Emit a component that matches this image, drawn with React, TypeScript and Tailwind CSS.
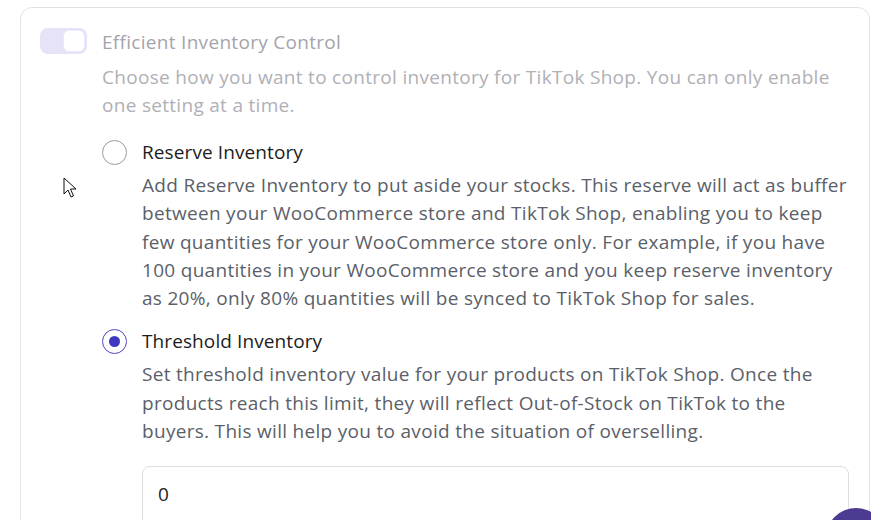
import React from 'react';

type Option = {
  id: string;
  label: string;
  lines: string[];
};

const options: Option[] = [
  {
    id: 'reserve',
    label: 'Reserve Inventory',
    lines: [
      'Add Reserve Inventory to put aside your stocks. This reserve will act as buffer',
      'between your WooCommerce store and TikTok Shop, enabling you to keep',
      'few quantities for your WooCommerce store only. For example, if you have',
      '100 quantities in your WooCommerce store and you keep reserve inventory',
      'as 20%, only 80% quantities will be synced to TikTok Shop for sales.'
    ]
  },
  {
    id: 'threshold',
    label: 'Threshold Inventory',
    lines: [
      'Set threshold inventory value for your products on TikTok Shop. Once the',
      'products reach this limit, they will reflect Out-of-Stock on TikTok to the',
      'buyers. This will help you to avoid the situation of overselling.'
    ]
  }
];

const Radio: React.FC<{ checked: boolean }> = ({ checked }) => (
  <div
    className={
      checked
        ? 'w-[25px] h-[25px] shrink-0 rounded-full border-[1.5px] border-[#4f46c8] flex items-center justify-center bg-white'
        : 'w-[25px] h-[25px] shrink-0 rounded-full border-[1.5px] border-[#9a9a9a] bg-white'
    }
  >
    {checked && <div className="w-[11px] h-[11px] rounded-full bg-[#3f37c0]" />}
  </div>
);

const App: React.FC = () => {
  const selected = 'threshold';

  return (
    <div className="relative w-[871px] h-[520px] overflow-hidden bg-white font-['Open_Sans',sans-serif] tracking-[0.3px]">
      <div className="ml-5 mt-[7px] w-[850px] h-[560px] rounded-xl border border-[#e2e2e2] pl-[19px] pt-[20px]">
        <div className="flex items-start gap-[15px]">
          <div className="w-[47px] h-[26px] shrink-0 rounded-lg bg-[#e6e2f7] flex items-center justify-end pr-[2px]">
            <div className="w-[22px] h-[22px] rounded-md bg-white border border-[#ece9fa]" />
          </div>
          <div className="w-[748px]">
            <p className="text-[19px] leading-[28px] text-[#a4a4ac]">Efficient Inventory Control</p>
            <p className="mt-[7px] text-[19px] leading-[28px] text-[#b0b0b6] whitespace-nowrap">
              <span className="block">Choose how you want to control inventory for TikTok Shop. You can only enable</span>
              <span className="block">one setting at a time.</span>
            </p>

            <div className="mt-[19px] flex flex-col gap-[15px]">
              {options.map((o) => (
                <div key={o.id} className="flex items-start gap-[15px]">
                  <div className="pt-[2px]">
                    <Radio checked={o.id === selected} />
                  </div>
                  <div className="w-[707px]">
                    <p className="text-[19px] leading-[28px] tracking-[0.1px] text-[#1d1d22]">{o.label}</p>
                    <p className="mt-[5px] text-[19px] leading-[28.3px] text-[#5b5f69] whitespace-nowrap">
                      {o.lines.map((l, i) => (
                        <span key={i} className="block">
                          {l}
                        </span>
                      ))}
                    </p>
                  </div>
                </div>
              ))}
            </div>

            <div className="ml-[40px] mt-[21px] w-[707px] h-[60px] rounded-lg border border-[#dedede] flex items-center px-[15px] pb-[4px] text-[19px] text-[#1d1d22]">
              0
            </div>
          </div>
        </div>
      </div>

      {/* mouse cursor */}
      <svg className="absolute left-[63px] top-[177px]" width="14" height="22" viewBox="0 0 14 22">
        <path
          d="M1 1 L1 17 L5 13 L8 20 L10.5 19 L7.5 12 L13 12 Z"
          fill="#fff"
          stroke="#111"
          strokeWidth="1"
          strokeLinejoin="round"
        />
      </svg>

      {/* floating chat button */}
      <div className="absolute left-[826px] top-[508px] w-[60px] h-[60px] rounded-full bg-[#4c3b90]" />
    </div>
  );
};

export default App;
